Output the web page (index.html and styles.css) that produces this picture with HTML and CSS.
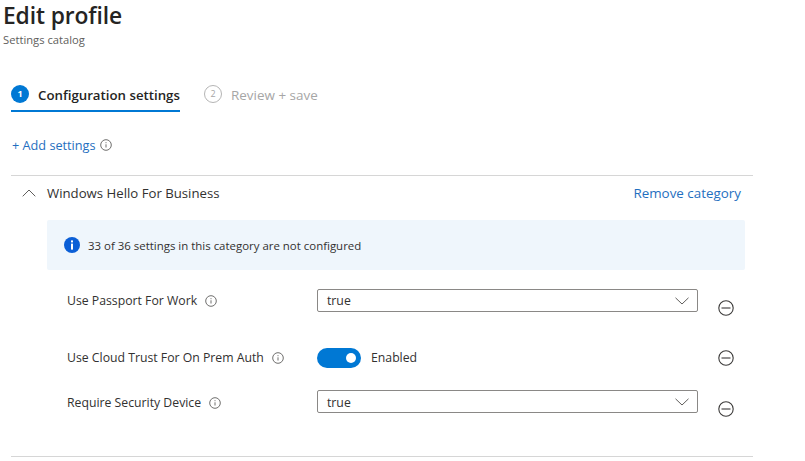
FILE: index.html
```html
<!DOCTYPE html>
<html lang="en">
<head>
<meta charset="utf-8">
<title>Edit profile</title>
<link rel="stylesheet" href="styles.css">
</head>
<body>
<main class="page">
  <h1 class="title">Edit profile</h1>
  <div class="subtitle">Settings catalog</div>
  <nav class="steps">
    <div class="step active"><span class="badge">1</span><span class="step-name">Configuration settings</span></div>
    <div class="step todo"><span class="badge">2</span><span class="step-name">Review + save</span></div>
  </nav>
  <div class="add"><span>+ Add settings</span>
    <svg class="info" viewBox="0 0 12 12"><circle cx="6" cy="6" r="5.3"/><path d="M6 5.3v3.2M6 3.2v1"/></svg>
  </div>
  <section class="category">
    <header class="cat-head">
      <svg class="chev-up" viewBox="0 0 14 8"><path d="M.7 7.3 7 1l6.3 6.3"/></svg>
      <span class="cat-name">Windows Hello For Business</span>
      <span class="remove">Remove category</span>
    </header>
    <div class="notice">
      <svg class="notice-icon" viewBox="0 0 16 16"><circle cx="8" cy="8" r="8"/><rect x="7" y="6.6" width="2" height="6" /><rect x="7" y="3.4" width="2" height="2"/></svg>
      <span>33 of 36 settings in this category are not configured</span>
    </div>
    <div class="row row-first">
      <div class="label"><span>Use Passport For Work</span><svg class="info" viewBox="0 0 12 12"><circle cx="6" cy="6" r="5.3"/><path d="M6 5.3v3.2M6 3.2v1"/></svg></div>
      <div class="select"><span>true</span><svg class="chev" viewBox="0 0 14 8"><path d="M.5.8 7 7l6.5-6.2"/></svg></div>
      <svg class="minus minus-low" viewBox="0 0 16 16"><circle cx="8" cy="8" r="7.2"/><path d="M3.5 8h9"/></svg>
    </div>
    <div class="row row-toggle">
      <div class="label"><span class="raised">Use Cloud Trust For On Prem Auth</span><svg class="info" viewBox="0 0 12 12"><circle cx="6" cy="6" r="5.3"/><path d="M6 5.3v3.2M6 3.2v1"/></svg></div>
      <div class="toggle-wrap"><span class="toggle"><span class="knob"></span></span><span class="raised">Enabled</span></div>
      <svg class="minus" viewBox="0 0 16 16"><circle cx="8" cy="8" r="7.2"/><path d="M3.5 8h9"/></svg>
    </div>
    <div class="row row-last">
      <div class="label"><span>Require Security Device</span><svg class="info" viewBox="0 0 12 12"><circle cx="6" cy="6" r="5.3"/><path d="M6 5.3v3.2M6 3.2v1"/></svg></div>
      <div class="select"><span>true</span><svg class="chev" viewBox="0 0 14 8"><path d="M.5.8 7 7l6.5-6.2"/></svg></div>
      <svg class="minus minus-low" viewBox="0 0 16 16"><circle cx="8" cy="8" r="7.2"/><path d="M3.5 8h9"/></svg>
    </div>
  </section>
</main>
</body>
</html>
```
FILE: styles.css
```css
* { box-sizing: border-box; }
html, body { margin: 0; height: 461px; overflow: hidden; background: #fff; }
body { font-family: "Open Sans", "Noto Sans", sans-serif; color: #323130; font-size: 12px; }
.page { width: 805px; height: 461px; }
.title { margin: 0 0 0 3px; font-size: 22.8px; line-height: 31px; font-weight: 600; color: #252423; letter-spacing: -0.1px; }
.subtitle { margin: 1px 0 0 3px; font-size: 11.2px; line-height: 15px; color: #605e5c; height: 15px; }
.steps { display: flex; margin: 31px 0 0 11px; height: 34px; gap: 24px; }
.step { display: flex; align-items: flex-start; gap: 9px; height: 34px; line-height: 18px; padding-top: 7px; }
.step-name { position: relative; top: 1px; }
.active { width: 169px; border-bottom: 2px solid #0078d4; font-weight: 600; color: #252423; font-size: 13.25px; }
.todo { color: #a6a6a6; font-size: 13.45px; }
.badge { width: 18px; height: 18px; border-radius: 50%; display: flex; align-items: center; justify-content: center; font-size: 9px; flex: none; }
.active .badge { background: #0078d4; color: #fff; font-weight: 700; }
.todo .badge { border: 1px solid #b5b5b5; color: #a6a6a6; }
.add { display: flex; align-items: center; gap: 4px; margin: 24px 0 0 12px; height: 18px; font-size: 12.7px; color: #1f6fc0; }
.info { width: 12px; height: 12px; flex: none; fill: none; stroke: #6f6e6d; stroke-width: 1; }
.category { margin: 21px 0 0 11px; width: 742px; height: 282px; border-top: 1px solid #d6d6d6; border-bottom: 1px solid #d6d6d6; }
.cat-head { display: flex; align-items: center; height: 33px; margin-bottom: 11px; padding: 0 12px 0 11px; font-size: 13.2px; }
.chev-up { width: 14px; height: 8px; fill: none; stroke: #605e5c; stroke-width: 1; flex: none; }
.cat-name { margin-left: 11px; }
.remove { margin-left: auto; color: #1f6fc0; font-size: 13.4px; }
.notice { display: flex; align-items: center; gap: 8px; margin: 0 0 0 36px; width: 698px; height: 50px; padding-left: 17px; background: #eff6fc; border-radius: 2px; font-size: 11.45px; color: #323130; }
.notice-icon { width: 16px; height: 16px; flex: none; fill: #0b5fd6; }
.notice-icon rect { fill: #fff; }
.row { display: flex; margin-left: 56px; align-items: center; font-size: 12.25px; }
.row-first { margin-top: 19px; height: 23px; }
.row-toggle { margin-top: 36px; height: 20px; }
.row-last { margin-top: 22px; height: 23px; }
.row-last .label { padding-top: 2px; }
.row-last .select { padding-top: 1px; }
.raised { padding-bottom: 2px; }
.label { display: flex; align-items: center; gap: 8px; width: 250px; flex: none; }
.select { display: flex; align-items: center; justify-content: space-between; width: 381px; height: 23px; padding: 0 8px 0 9px; border: 1px solid #8a8886; border-radius: 2px; color: #323130; flex: none; }
.chev { width: 14px; height: 8px; fill: none; stroke: #605e5c; stroke-width: 1; }
.toggle-wrap { display: flex; align-items: center; gap: 10px; width: 381px; flex: none; }
.toggle { display: flex; align-items: center; justify-content: flex-end; width: 44px; height: 20px; padding-right: 5px; background: #0078d4; border-radius: 10px; }
.knob { width: 10px; height: 10px; background: #fff; border-radius: 50%; }
.minus { width: 16px; height: 16px; margin-left: 20px; flex: none; fill: none; stroke: #3b3a39; stroke-width: 1.1; }
.minus-low { position: relative; top: 7px; }
```
